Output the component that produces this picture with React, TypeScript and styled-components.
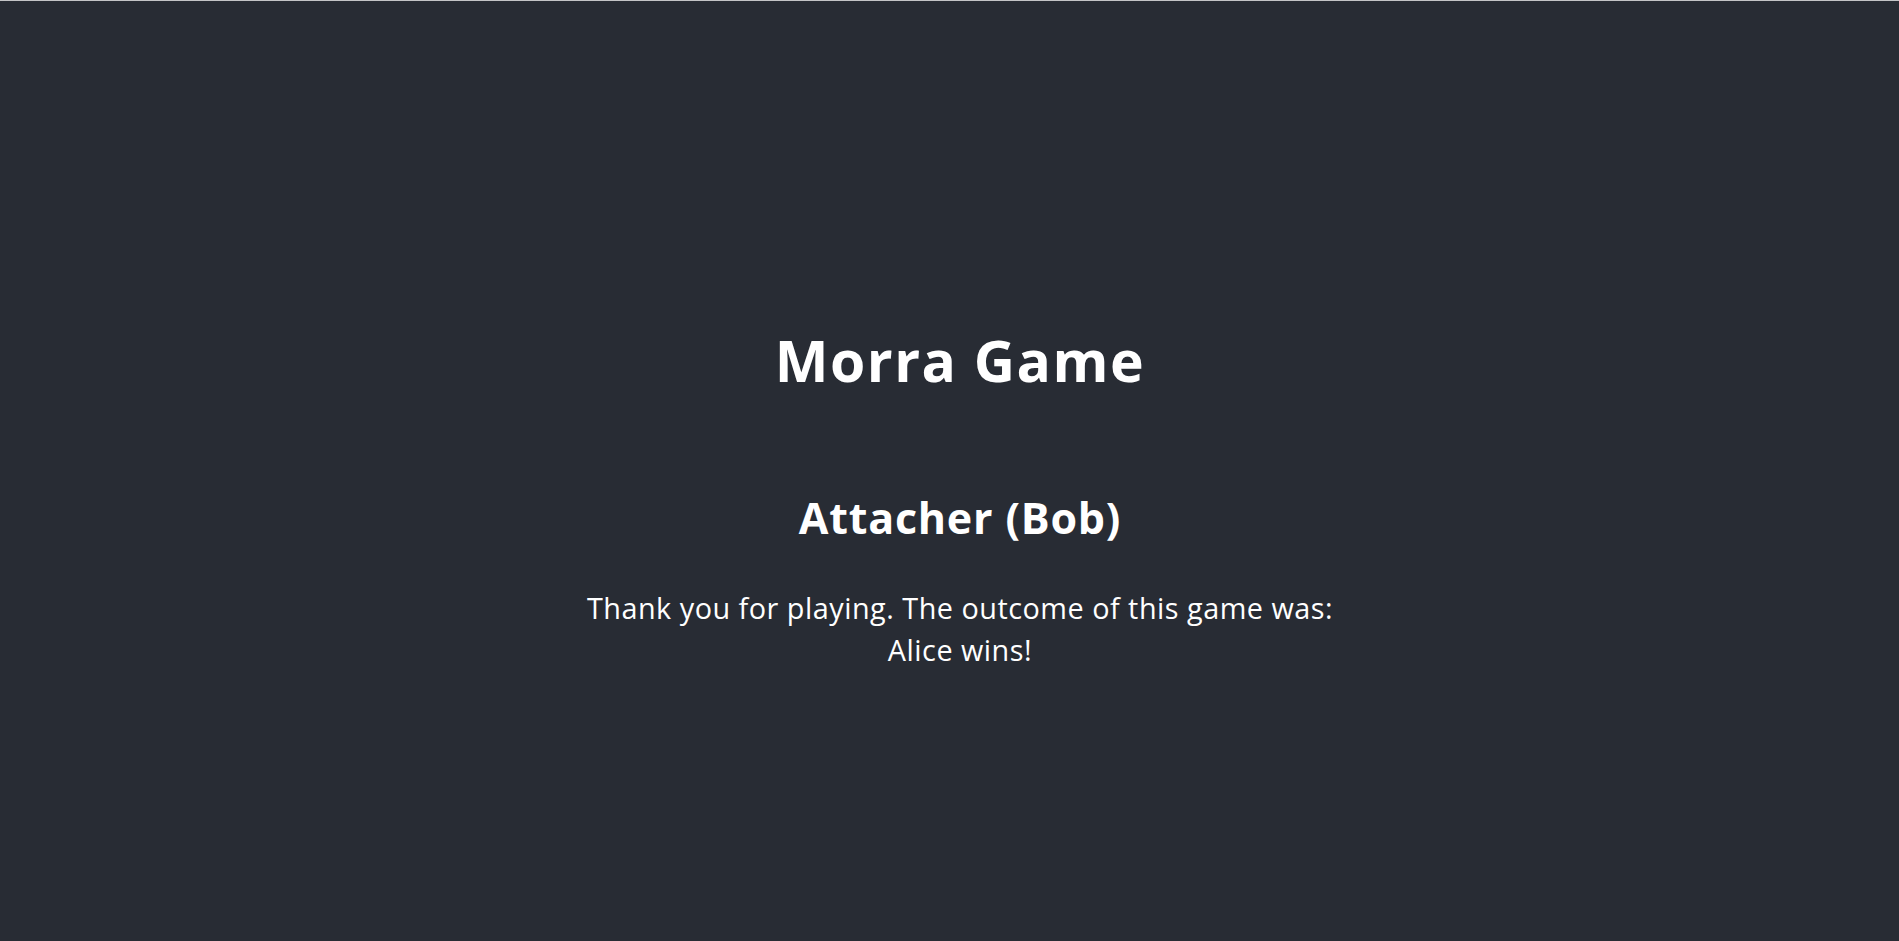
import React from "react";
import styled, { createGlobalStyle } from "styled-components";

const Global = createGlobalStyle`
  html, body { margin: 0; padding: 0; background: #282c34; }
  body { font-family: "Open Sans", "Noto Sans", sans-serif; }
  * { box-sizing: border-box; }
`;

const Header = styled.header`
  min-height: 100vh;
  border-top: 1px solid #c4c5c7;
  background: #282c34;
  color: #ffffff;
  display: flex;
  flex-direction: column;
  align-items: center;
  justify-content: center;
  padding-left: 21px;
  padding-top: 52px;
  text-align: center;
  font-size: 28.8px;
`;

const Title = styled.h1`
  font-size: 57px;
  font-weight: 700;
  letter-spacing: 1.5px;
  margin: 0 0 90px;
  line-height: 1.33;
`;

const Subtitle = styled.h2`
  font-size: 43px;
  font-weight: 700;
  letter-spacing: 0.8px;
  margin: 0 0 41px;
  line-height: 1.33;
`;

const Message = styled.p`
  margin: 0;
  line-height: 42px;
  letter-spacing: 0.5px;
`;

export default function App() {
  return (
    <>
      <Global />
      <Header>
        <Title>Morra Game</Title>
        <Subtitle>Attacher (Bob)</Subtitle>
        <Message>
          Thank you for playing. The outcome of this game was:
          <br />
          Alice wins!
        </Message>
      </Header>
    </>
  );
}
